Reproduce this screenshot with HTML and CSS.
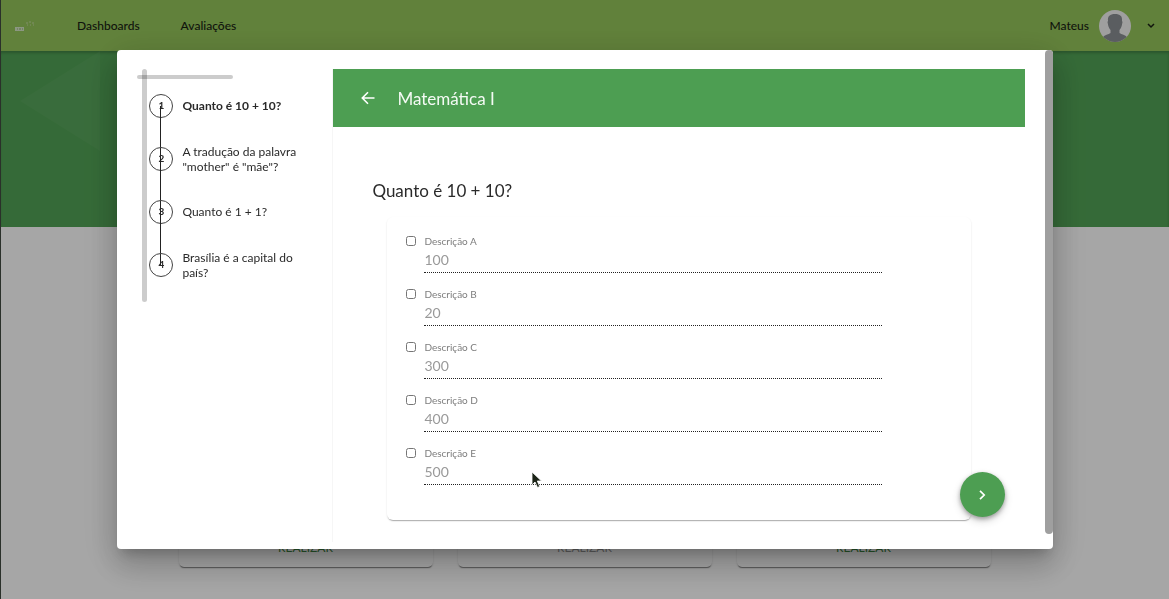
FILE: index.html
```html
<!DOCTYPE html>
<html lang="pt-BR">
<head>
    <meta charset="UTF-8">
    <meta name="viewport" content="width=device-width, initial-scale=1.0">
    <title>Avaliações</title>
    <link rel="stylesheet" href="styles.css">
</head>
<body>
    <header class="topbar">
        <a class="logo" href="#" aria-label="Início">
            <svg width="22" height="12" viewBox="0 0 22 12">
                <rect x="1" y="7" width="9" height="4" fill="#d8e8c8" />
                <path d="M3 9h1M5 9h2M8 9h1" stroke="#8fae70" stroke-width="1" />
                <path d="M12 3h2M15 2h2M18 3h2M13 5h1M16 5h1M19 5h1" stroke="#c5dba4" stroke-width="1" />
            </svg>
        </a>
        <nav class="menu">
            <a href="#">Dashboards</a>
            <a href="#">Avaliações</a>
        </nav>
        <button class="user" type="button">
            <span>Mateus</span>
            <svg class="avatar" width="32" height="32" viewBox="0 0 32 32">
                <clipPath id="avatar-clip"><circle cx="16" cy="16" r="16" /></clipPath>
                <g clip-path="url(#avatar-clip)">
                    <rect width="32" height="32" fill="#f4f4f4" />
                    <path d="M16 4c-5 0-7.500 2-7 7l-.5 1 .8 4c.7 2 1.500 3 2.200 4v3c-2 1.500-6 2-7.500 4v5h24v-5c-1.500-2-5.500-2.500-7.500-4v-3c.7-1 1.500-2 2.200-4l.8-4-.5-1c.5-5-2-7-7-7z" fill="#8b8f94" />
                </g>
            </svg>
            <svg class="chevron" width="8" height="6" viewBox="0 0 8 6">
                <path d="M1 1l3 3 3-3" fill="none" stroke="currentColor" stroke-width="1.500" />
            </svg>
        </button>
    </header>

    <section class="hero"></section>

    <section class="exams">
        <article class="exam"><button type="button">REALIZAR</button></article>
        <article class="exam"><button type="button" disabled>REALIZAR</button></article>
        <article class="exam"><button type="button">REALIZAR</button></article>
    </section>

    <div class="overlay">
        <div class="dialog" role="dialog" aria-labelledby="exam-title">
            <aside class="sidebar">
                <div class="bar bar-x"></div>
                <div class="bar bar-y"></div>
                <ol class="steps">
                    <li class="step active"><span class="number">1</span><span>Quanto é 10 + 10?</span></li>
                    <li class="step"><span class="number">2</span><span>A tradução da palavra "mother" é "mãe"?</span></li>
                    <li class="step"><span class="number">3</span><span>Quanto é 1 + 1?</span></li>
                    <li class="step"><span class="number">4</span><span>Brasília é a capital do país?</span></li>
                </ol>
            </aside>

            <main class="content">
                <div class="toolbar">
                    <button class="back" type="button" aria-label="Voltar">
                        <svg width="14" height="14" viewBox="0 0 14 14">
                            <path d="M13.500 7H1.500M7 1.300L1.300 7 7 12.700" fill="none" stroke="#fff" stroke-width="1.600" />
                        </svg>
                    </button>
                    <h1 id="exam-title">Matemática I</h1>
                </div>

                <form class="question">
                    <h2>Quanto é 10 + 10?</h2>
                    <div class="options">
                        <div class="option">
                            <input type="checkbox" aria-label="Opção A">
                            <div class="field">
                                <label for="option-a">Descrição A</label>
                                <input type="text" id="option-a" value="100" disabled>
                            </div>
                        </div>
                        <div class="option">
                            <input type="checkbox" aria-label="Opção B">
                            <div class="field">
                                <label for="option-b">Descrição B</label>
                                <input type="text" id="option-b" value="20" disabled>
                            </div>
                        </div>
                        <div class="option">
                            <input type="checkbox" aria-label="Opção C">
                            <div class="field">
                                <label for="option-c">Descrição C</label>
                                <input type="text" id="option-c" value="300" disabled>
                            </div>
                        </div>
                        <div class="option">
                            <input type="checkbox" aria-label="Opção D">
                            <div class="field">
                                <label for="option-d">Descrição D</label>
                                <input type="text" id="option-d" value="400" disabled>
                            </div>
                        </div>
                        <div class="option">
                            <input type="checkbox" aria-label="Opção E">
                            <div class="field">
                                <label for="option-e">Descrição E</label>
                                <input type="text" id="option-e" value="500" disabled>
                            </div>
                        </div>
                        <svg class="pointer" width="12" height="18" viewBox="0 0 12 18">
                            <path d="M1 1v13l3-3 2.500 5.500 2.200-1L6.300 10H10.500z" fill="#1c2418" stroke="#fff" stroke-width=".8" />
                        </svg>
                    </div>
                </form>
            </main>

            <button class="next" type="button" aria-label="Próxima">
                <svg width="8" height="12" viewBox="0 0 8 12">
                    <path d="M2 1.800L6.200 6 2 10.200" fill="none" stroke="#fff" stroke-width="1.700" />
                </svg>
            </button>
            <div class="bar dialog-bar"></div>
        </div>
    </div>
</body>
</html>
```

FILE: styles.css
```css
* {
    box-sizing: border-box;
}

body {
    margin: 0;
    min-height: 100vh;
    overflow: hidden;
    background: #fff;
    color: #2a2a2a;
    font-family: Lato, sans-serif;
    font-size: 12px;
}

button {
    padding: 0;
    border: 0;
    background: none;
    color: inherit;
    font: inherit;
    cursor: pointer;
}

/* page behind the dialog */
.topbar {
    display: flex;
    align-items: center;
    height: 51px;
    padding: 0 14px;
    background: #96c75b;
}

.logo {
    display: flex;
    width: 63px;
}

.menu {
    display: flex;
    gap: 41px;
    flex: 1;
}

.menu a {
    color: #1a1f14;
    font-weight: 500;
    text-decoration: none;
}

.user {
    display: flex;
    align-items: center;
    gap: 10px;
    color: #1a1f14;
    font-weight: 500;
}

.chevron {
    margin-left: 6px;
}

.hero {
    height: 176px;
    background: #52a456;
    box-shadow: inset 0 2px 3px rgba(0, 0, 0, 0.2);
}

/* faint arrow in the banner */
.hero::before {
    content: "";
    display: block;
    width: 50%;
    height: 100px;
    margin-left: 20px;
    background: rgba(255, 255, 255, 0.04);
    clip-path: polygon(0 50%, 80px 0, 80px 100%);
}

.exams {
    display: grid;
    grid-template-columns: repeat(3, 1fr);
    gap: 25px;
    max-width: 812px;
    margin: 10px auto 0;
}

.exam {
    display: flex;
    flex-direction: column;
    justify-content: flex-end;
    height: 330px;
    border-radius: 5px;
    box-shadow: 0 2px 1px -1px rgba(0, 0, 0, 0.4), 0 1px 2px rgba(0, 0, 0, 0.15);
}

.exam button {
    height: 40px;
    color: #3f8a43;
    font-size: 12px;
}

.exam button:disabled {
    color: #999;
}

/* dialog */
.overlay {
    position: fixed;
    inset: 0;
    display: flex;
    align-items: center;
    justify-content: center;
    border-left: 1px solid #2a302a;
    background: rgba(0, 0, 0, 0.35);
}

.dialog {
    position: relative;
    display: flex;
    width: 80vw;
    padding: 19px 28px 7px 20px;
    border-radius: 4px;
    background: #fff;
    box-shadow: 0 9px 12px -5px rgba(0, 0, 0, 0.2),
                0 18px 30px 2px rgba(0, 0, 0, 0.14),
                0 7px 36px 6px rgba(0, 0, 0, 0.12);
}

.bar {
    position: absolute;
    border-radius: 3px;
    background: rgba(0, 0, 0, 0.2);
}

.dialog-bar {
    top: 0;
    right: 0;
    bottom: 15px;
    width: 8px;
    border-radius: 4px;
    background: #9f9f9f;
}

.sidebar {
    position: relative;
    flex: 0 0 195px;
}

.bar-x {
    top: 6px;
    left: 0;
    width: 96px;
    height: 4px;
}

.bar-y {
    top: 0;
    left: 5px;
    width: 5px;
    height: 233px;
}

.steps {
    margin: 0;
    padding: 10px 24px 0 12px;
    list-style: none;
}

.step {
    position: relative;
    display: flex;
    align-items: center;
    gap: 9px;
    height: 53px;
    line-height: 15px;
}

.step.active {
    font-weight: bold;
}

.number {
    display: flex;
    align-items: center;
    justify-content: center;
    flex: 0 0 24px;
    height: 24px;
    border: 1px solid #444;
    border-radius: 50%;
    font-size: 10px;
    font-weight: bold;
}

.step:not(:last-child)::after {
    content: "";
    position: absolute;
    top: 50%;
    left: 11px;
    width: 1px;
    height: 100%;
    background: #222;
}

.content {
    flex: 1;
    min-width: 0;
    border-left: 1px solid #f6f6f6;
}

.toolbar {
    display: flex;
    align-items: center;
    gap: 22px;
    height: 58px;
    padding: 0 28px;
    background: #4d9e52;
    color: #f4faf4;
}

.back {
    display: flex;
}

.toolbar h1 {
    margin: 0;
    font-size: 17px;
    font-weight: normal;
}

.question {
    padding: 52px 54px 22px;
}

.question h2 {
    margin: 0 0 14px -15px;
    font-size: 17px;
    font-weight: normal;
    line-height: 24px;
}

.options {
    position: relative;
    display: flex;
    flex-direction: column;
    gap: 14px;
    padding: 17px 89px 35px 19px;
    border-radius: 6px;
    box-shadow: 0 2px 1px -1px rgba(0, 0, 0, 0.25), 0 1px 2px rgba(0, 0, 0, 0.12);
}

.option {
    display: flex;
    align-items: flex-start;
    gap: 8px;
}

.option input[type="checkbox"] {
    width: 10px;
    height: 10px;
    margin: 2px 0 0;
}

.field {
    display: flex;
    flex-direction: column;
    flex: 1;
}

.field label {
    color: #7d7d7d;
    font-size: 10px;
    line-height: 14px;
}

.field input {
    width: 100%;
    height: 25px;
    padding: 0 0 2px;
    border: 0;
    border-bottom: 1px dotted #222;
    background: none;
    color: #999;
    font: inherit;
    font-size: 14px;
}

.pointer {
    position: absolute;
    left: 144px;
    bottom: 31px;
}

.next {
    position: absolute;
    right: 48px;
    bottom: 32px;
    display: flex;
    align-items: center;
    justify-content: center;
    width: 45px;
    height: 45px;
    border-radius: 50%;
    background: #4d9e52;
    box-shadow: 0 2px 4px rgba(0, 0, 0, 0.3), 0 4px 9px rgba(0, 0, 0, 0.16);
}
```
